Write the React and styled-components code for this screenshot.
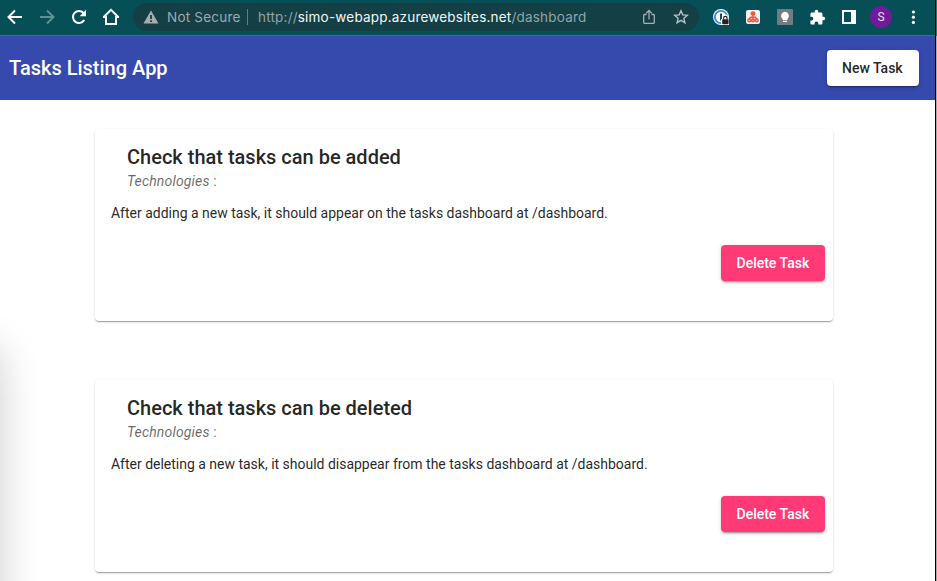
import React from "react";
import styled, { createGlobalStyle } from "styled-components";

const GlobalStyle = createGlobalStyle`
  * { box-sizing: border-box; }
  html, body { margin: 0; overflow: hidden; background: #fff; }
  body { font-family: Roboto, "Liberation Sans", sans-serif; color: rgba(0, 0, 0, 0.87); }
`;

const Window = styled.div`
  display: grid;
  grid-template-columns: 935px 2px;
  width: 937px;
  height: 581px;
`;

const WindowEdge = styled.div`
  background: linear-gradient(#3c6b6b 0 36px, #a9abaa 36px);
  border-left: 1px solid #000;
`;

const Screen = styled.div`
  position: relative;
  display: flex;
  flex-direction: column;
  height: 581px;
  overflow: hidden;
`;

const BrowserBar = styled.header`
  display: flex;
  flex: none;
  align-items: flex-start;
  height: 36px;
  background: #064f56;
  border-bottom: 1px solid #347672;
`;

const IconGroup = styled.div`
  display: flex;
  height: 34px;
  align-items: center;
  margin-left: ${(p) => p.$offset}px;
`;

const IconSlot = styled.span`
  display: flex;
  flex: none;
  align-items: center;
  justify-content: center;
  width: 32px;
  height: 34px;
  svg { display: block; }
`;

const AddressBar = styled.div`
  display: flex;
  align-items: center;
  width: 566px;
  height: 28px;
  margin: 3px 0 0 6px;
  padding: 0 2px 0 10px;
  border-radius: 14px;
  background: #133f45;
  font-family: Inter, "Liberation Sans", sans-serif;
  font-size: 13.5px;
  line-height: 28px;
  white-space: nowrap;
  svg { display: block; flex: none; }
`;

const Security = styled.span`
  width: 73px;
  margin-left: 8px;
  color: #9cabae;
  letter-spacing: 0.22px;
`;

const Divider = styled.span`
  width: 1px;
  height: 16px;
  margin: 0 10px 0 7px;
  background: #5f7f83;
`;

const Url = styled.span`
  flex: 1;
  color: #8fa6a9;
  letter-spacing: 0.2px;
  b { color: #f3f7f7; font-weight: 400; }
`;

const Avatar = styled.span`
  display: flex;
  align-items: center;
  justify-content: center;
  width: 22px;
  height: 22px;
  border-radius: 50%;
  background: #701b9b;
  color: #e9dcf0;
  font-size: 12px;
`;

const AppBar = styled.nav`
  display: flex;
  flex: none;
  align-items: center;
  justify-content: space-between;
  height: 64px;
  padding: 0 16px 0 9px;
  background: #3649ac;
  color: #fff;
`;

const AppTitle = styled.h1`
  margin: 0;
  font-size: 20px;
  font-weight: 500;
  line-height: 32px;
`;

const Button = styled.button`
  height: 36px;
  padding: 0 ${(p) => (p.$warn ? 15.5 : 15)}px;
  border: 0;
  border-radius: 4px;
  background: ${(p) => (p.$warn ? "#ff3a77" : "#fff")};
  color: ${(p) => (p.$warn ? "#fff" : "rgba(0, 0, 0, 0.87)")};
  font: 500 14px/36px Roboto, "Liberation Sans", sans-serif;
  width: ${(p) => (p.$warn ? 104 : 92)}px;
  white-space: nowrap;
  text-align: left;
  box-shadow: 0 3px 1px -2px rgba(0, 0, 0, 0.2), 0 2px 2px rgba(0, 0, 0, 0.14),
    0 1px 5px rgba(0, 0, 0, 0.12);
`;

const TaskList = styled.main`
  display: flex;
  flex-direction: column;
  gap: 59px;
  padding: 29px 102px 0 95px;
`;

const Card = styled.article`
  display: flex;
  flex-direction: column;
  height: 192px;
  padding: 16px 8px 0 16px;
  border-radius: 4px;
  background: #fff;
  box-shadow: 0 2px 1px -1px rgba(0, 0, 0, 0.2), 0 1px 1px rgba(0, 0, 0, 0.14),
    0 1px 3px rgba(0, 0, 0, 0.12);
`;

const CardTitle = styled.h2`
  margin: 0 16px;
  font-size: 20px;
  font-weight: 500;
  line-height: 24px;
`;

const CardSubtitle = styled.p`
  margin: 0 16px;
  color: rgba(0, 0, 0, 0.6);
  font-size: 14px;
  line-height: 24px;
  letter-spacing: 0.16px;
`;

const CardText = styled.p`
  margin: 10px 0 0;
  font-size: 14px;
  line-height: 20px;
  letter-spacing: -0.01px;
`;

const CardActions = styled.div`
  display: flex;
  justify-content: flex-end;
  margin-top: 22px;
`;

const SideShadow = styled.div`
  position: absolute;
  left: -80px;
  top: 336px;
  width: 80px;
  height: 360px;
  box-shadow: 0 14px 40px rgba(0, 0, 0, 0.2);
  pointer-events: none;
`;

const Arrow = ({ forward }) => (
  <svg width="16" height="16" viewBox="0 0 16 16" fill="none" stroke={forward ? "#5d9293" : "#fff"} strokeWidth="2">
    <path d={forward ? "M1 8h13M8 1.5 14.5 8 8 14.5" : "M15 8H2M8 1.5 1.5 8 8 14.5"} />
  </svg>
);

const Reload = () => (
  <svg width="16" height="16" viewBox="0 0 16 16">
    <path d="M13.2 11A6 6 0 1 1 12.5 4" fill="none" stroke="#fff" strokeWidth="2" />
    <path d="M15 .8v6.4H8.6z" fill="#fff" />
  </svg>
);

const Home = () => (
  <svg width="18" height="18" viewBox="0 0 18 18" fill="none" stroke="#fff" strokeWidth="2">
    <path d="M1.5 9.2 9 1.9l7.5 7.3M4 8v8h10V8" />
    <path d="M1 9.4h3M14 9.4h3" strokeWidth="1.2" />
  </svg>
);

const Warning = () => (
  <svg width="16" height="14" viewBox="0 0 16 14">
    <path d="M8 .5 15.5 13.5H.5z" fill="#a7adaf" />
    <path d="M8 5v4M8 10.2v1.9" stroke="#133f45" strokeWidth="1.8" />
  </svg>
);

const Share = () => (
  <svg width="14" height="16" viewBox="0 0 14 16" fill="none" stroke="#a3b1b3" strokeWidth="1.3">
    <path d="M4.5 5.5H2.4a.7.7 0 0 0-.7.7v7.4c0 .4.3.7.7.7h9.2c.4 0 .7-.3.7-.7V6.2a.7.7 0 0 0-.7-.7H9.5M7 10.5V1.5M4.2 4.2 7 1.4l2.8 2.8" />
  </svg>
);

const Star = () => (
  <svg width="16" height="16" viewBox="0 0 16 16" fill="none" stroke="#b6c2c4" strokeWidth="1.4">
    <path d="m8 1.8 1.8 4.1 4.5.4-3.4 3 1 4.4L8 11.4l-3.9 2.3 1-4.4-3.4-3 4.5-.4z" />
  </svg>
);

const PasswordExtension = () => (
  <svg width="17" height="17" viewBox="0 0 17 17">
    <circle cx="8" cy="8" r="8" fill="#f4f8fb" />
    <circle cx="8" cy="8" r="6.1" fill="#fff" stroke="#3b8de0" strokeWidth="1.9" />
    <path d="M7 4.5h2v7H7z" fill="#27445e" />
    <path d="M8 10h1.5V8.3a2.7 2.7 0 0 1 5.4 0V10H16v6H8z" fill="#fff" />
    <path d="M10.6 10.5V9a1.7 1.7 0 0 1 3.4 0v1.5" fill="none" stroke="#222" strokeWidth="1.2" />
    <rect x="9.2" y="10.3" width="6.4" height="5" rx=".8" fill="#222" />
  </svg>
);

const SitemapExtension = () => (
  <svg width="14" height="14" viewBox="0 0 14 14">
    <rect width="14" height="14" rx="2" fill="#f2f0ef" />
    <g fill="none" stroke="#ed593f" strokeWidth="1.5">
      <circle cx="7" cy="3.6" r="1.7" fill="#ed593f" />
      <path d="M7 5.5v5M3.1 9.5 4.6 7.2h4.8l1.5 2.3" />
      <circle cx="3.2" cy="10.4" r="1.3" />
      <circle cx="7" cy="10.4" r="1.3" />
      <circle cx="10.8" cy="10.4" r="1.3" />
    </g>
  </svg>
);

const BulbExtension = () => (
  <svg width="16" height="16" viewBox="0 0 16 16">
    <rect width="16" height="16" rx="1" fill="#757a82" />
    <path d="M8 2.8a4 4 0 0 0-2.4 7.1V11h4.8V9.9A4 4 0 0 0 8 2.8zM6 11.8h4v1.3H6z" fill="#fff" />
  </svg>
);

const Puzzle = () => (
  <svg width="17" height="17" viewBox="0 0 24 24" fill="#fff">
    <path d="M20.5 11H19V7c0-1.1-.9-2-2-2h-4V3.5a2.5 2.5 0 0 0-5 0V5H4c-1.1 0-2 .9-2 2v3.8h1.5a2.7 2.7 0 0 1 0 5.4H2V20c0 1.1.9 2 2 2h3.8v-1.5a2.7 2.7 0 0 1 5.4 0V22H17c1.1 0 2-.9 2-2v-4h1.5a2.5 2.5 0 0 0 0-5z" />
  </svg>
);

const SidePanel = () => (
  <svg width="14" height="14" viewBox="0 0 14 14">
    <path d="M0 0h14v14H0zM2 2v10h7V2z" fill="#fff" fillRule="evenodd" />
  </svg>
);

const Menu = () => (
  <svg width="4" height="14" viewBox="0 0 4 14" fill="#fff">
    <circle cx="2.4" cy="2" r="1.6" />
    <circle cx="2.4" cy="7.2" r="1.6" />
    <circle cx="2.4" cy="12.4" r="1.6" />
  </svg>
);

const tasks = [
  {
    title: "Check that tasks can be added",
    text: "After adding a new task, it should appear on the tasks dashboard at /dashboard.",
  },
  {
    title: "Check that tasks can be deleted",
    text: "After deleting a new task, it should disappear from the tasks dashboard at /dashboard.",
  },
];

export default function App() {
  return (
    <>
      <GlobalStyle />
      <Window>
        <Screen>
          <BrowserBar>
            <IconGroup $offset={-1}>
              <IconSlot><Arrow /></IconSlot>
              <IconSlot><Arrow forward /></IconSlot>
              <IconSlot><Reload /></IconSlot>
              <IconSlot><Home /></IconSlot>
            </IconGroup>
            <AddressBar>
              <Warning />
              <Security>Not Secure</Security>
              <Divider />
              <Url>http://<b>simo-webapp.azurewebsites.net</b>/dashboard</Url>
              <IconSlot><Share /></IconSlot>
              <IconSlot><Star /></IconSlot>
            </AddressBar>
            <IconGroup $offset={6}>
              <IconSlot><PasswordExtension /></IconSlot>
              <IconSlot><SitemapExtension /></IconSlot>
              <IconSlot><BulbExtension /></IconSlot>
              <IconSlot><Puzzle /></IconSlot>
              <IconSlot><SidePanel /></IconSlot>
              <IconSlot><Avatar>S</Avatar></IconSlot>
              <IconSlot><Menu /></IconSlot>
            </IconGroup>
          </BrowserBar>
          <AppBar>
            <AppTitle>Tasks Listing App</AppTitle>
            <Button>New Task</Button>
          </AppBar>
          <TaskList>
            {tasks.map((task) => (
              <Card key={task.title}>
                <CardTitle>{task.title}</CardTitle>
                <CardSubtitle><em>Technologies</em> :</CardSubtitle>
                <CardText>{task.text}</CardText>
                <CardActions><Button $warn>Delete Task</Button></CardActions>
              </Card>
            ))}
          </TaskList>
          <SideShadow />
        </Screen>
        <WindowEdge />
      </Window>
    </>
  );
}
